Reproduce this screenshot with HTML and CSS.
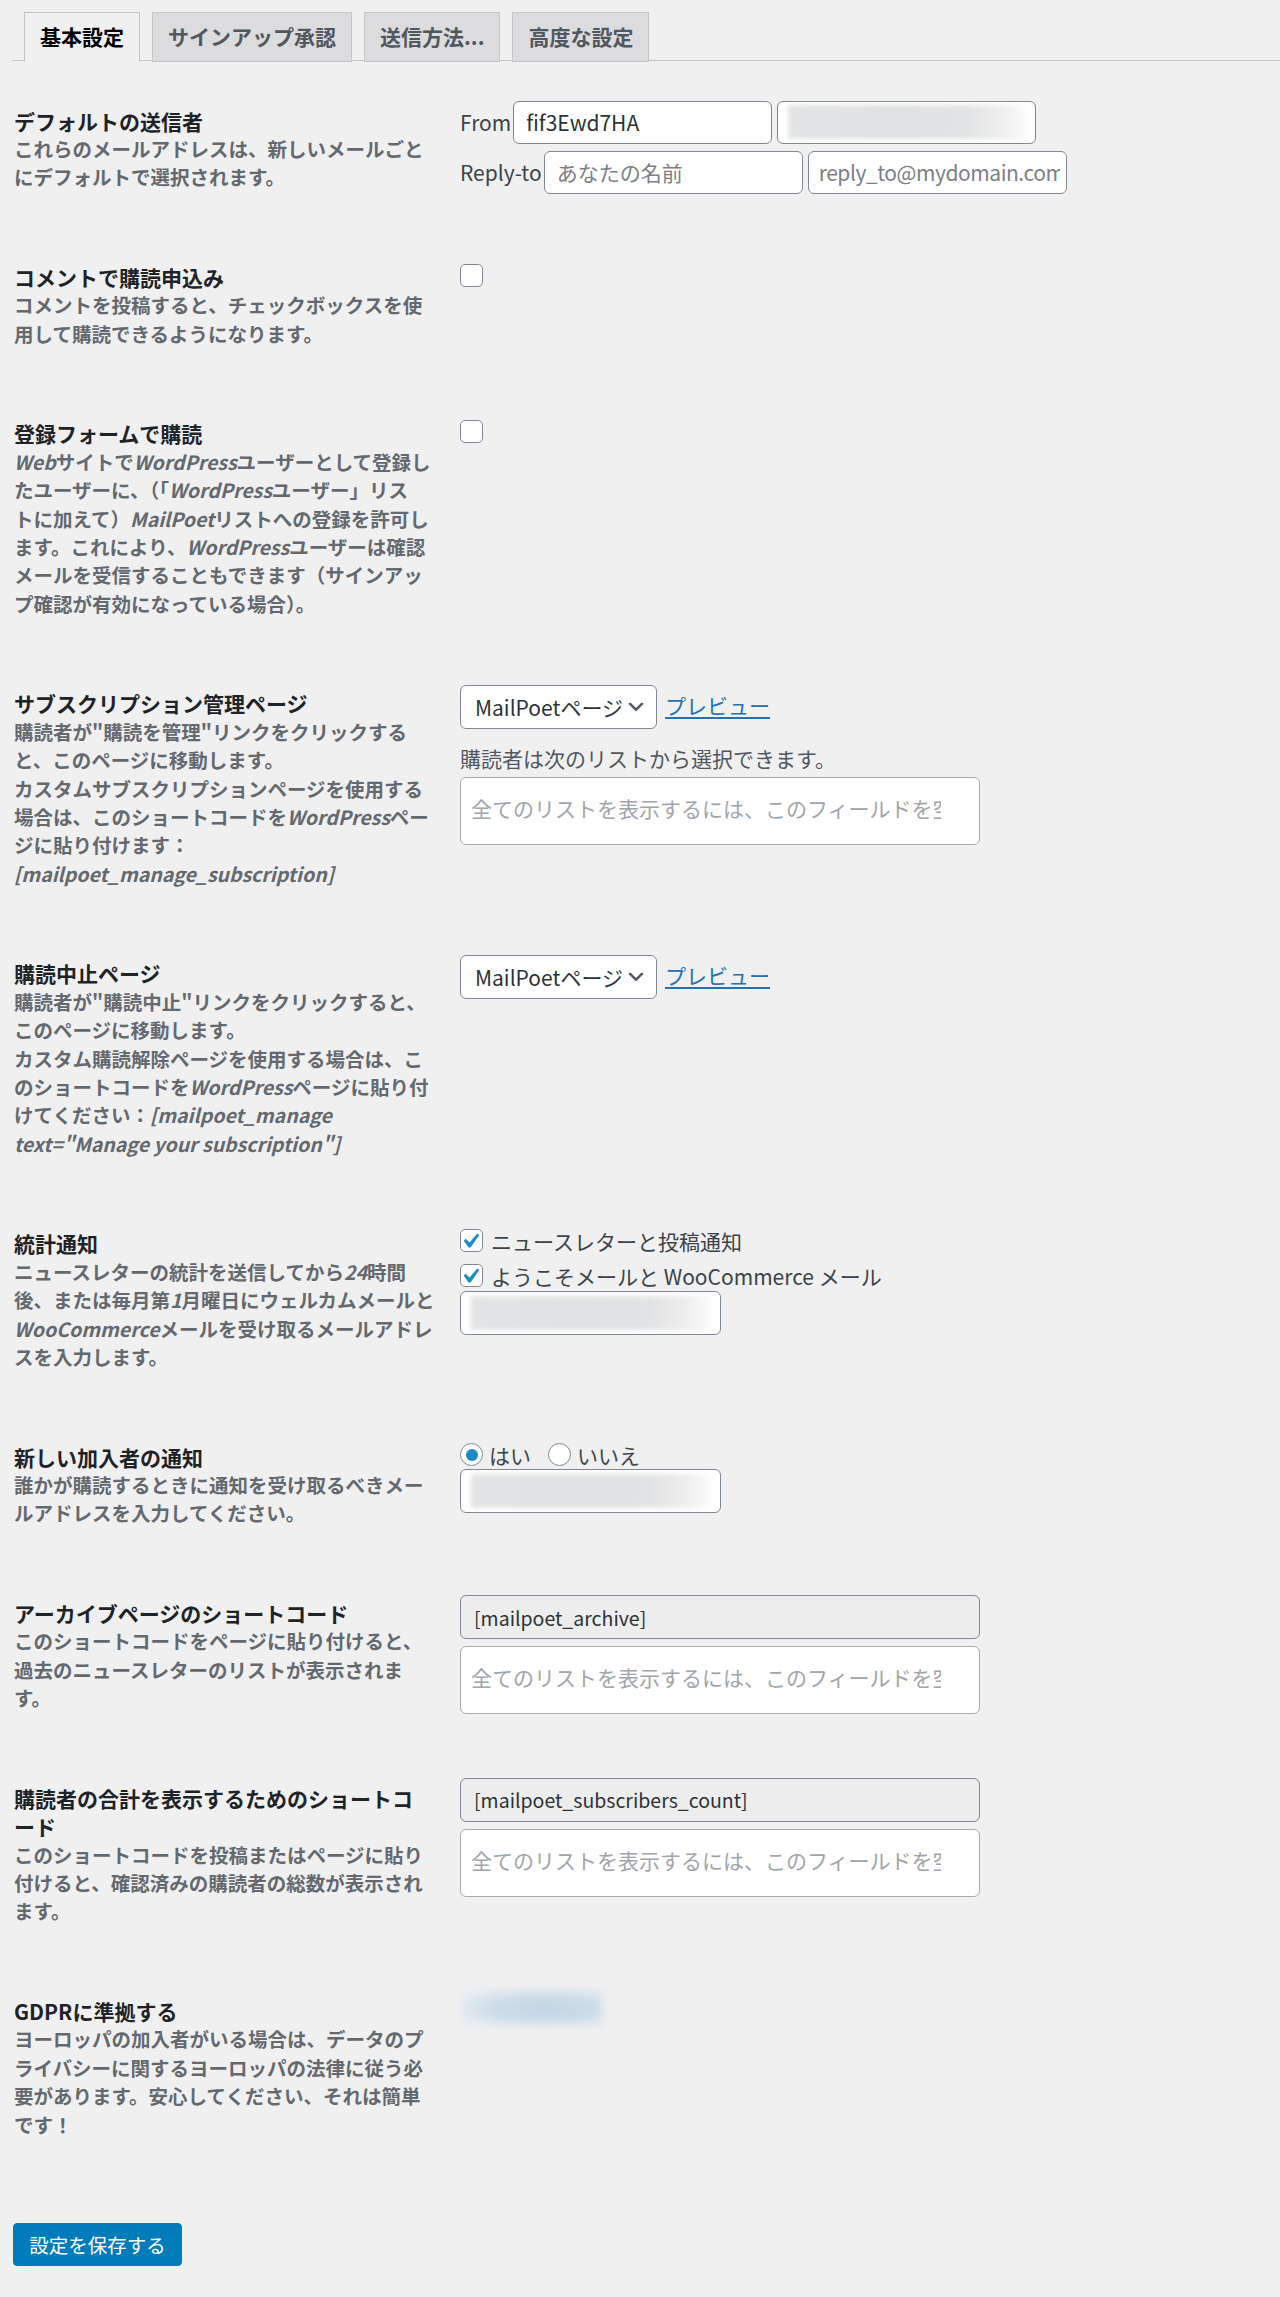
FILE: index.html
```html
<!DOCTYPE html>
<html lang="ja">
<head>
<meta charset="utf-8">
<title>MailPoet 設定</title>
<link rel="stylesheet" href="styles.css">
</head>
<body>
<div class="wrap">
  <nav class="tabs">
    <a class="tab active">基本設定</a>
    <a class="tab">サインアップ承認</a>
    <a class="tab">送信方法...</a>
    <a class="tab">高度な設定</a>
  </nav>

  <div class="form">
    <div class="row">
      <div class="th">
        <div class="label">デフォルトの送信者</div>
        <p class="desc">これらのメールアドレスは、新しいメールごと<br>にデフォルトで選択されます。</p>
      </div>
      <div class="td">
        <div class="sender">
          <span class="sender-label">From</span>
          <input class="text" type="text" value="fif3Ewd7HA">
          <div class="text blurred"><span class="smudge"></span></div>
        </div>
        <div class="sender">
          <span class="sender-label">Reply-to</span>
          <input class="text" type="text" placeholder="あなたの名前">
          <input class="text tight" type="text" placeholder="reply_to@mydomain.com">
        </div>
      </div>
    </div>

    <div class="row">
      <div class="th">
        <div class="label">コメントで購読申込み</div>
        <p class="desc">コメントを投稿すると、チェックボックスを使<br>用して購読できるようになります。</p>
      </div>
      <div class="td td-cb">
        <div class="check-line"><span class="cb"></span></div>
      </div>
    </div>

    <div class="row">
      <div class="th">
        <div class="label">登録フォームで購読</div>
        <p class="desc"><i>Web</i>サイトで<i>WordPress</i>ユーザーとして登録し<br>たユーザーに、（「<i>WordPress</i>ユーザー」リス<br>トに加えて）<i>MailPoet</i>リストへの登録を許可し<br>ます。これにより、<i>WordPress</i>ユーザーは確認<br>メールを受信することもできます（サインアッ<br>プ確認が有効になっている場合）。</p>
      </div>
      <div class="td td-cb">
        <div class="check-line"><span class="cb"></span></div>
      </div>
    </div>

    <div class="row">
      <div class="th">
        <div class="label">サブスクリプション管理ページ</div>
        <p class="desc">購読者が"購読を管理"リンクをクリックする<br>と、このページに移動します。<br>カスタムサブスクリプションページを使用する<br>場合は、このショートコードを<i>WordPress</i>ペー<br>ジに貼り付けます：<br><i>[mailpoet_manage_subscription]</i></p>
      </div>
      <div class="td td-sel">
        <div class="select-line">
          <span class="select">MailPoetページ<svg class="chev" viewBox="0 0 20 20" width="22" height="22"><path d="M5 6l5 5 5-5 2 1-7 7-7-7 2-1z" fill="#50575e"/></svg></span>
          <a class="link">プレビュー</a>
        </div>
        <p class="note">購読者は次のリストから選択できます。</p>
        <div class="s2"><span class="s2-ph">全てのリストを表示するには、このフィールドを空のままにします</span></div>
      </div>
    </div>

    <div class="row">
      <div class="th">
        <div class="label">購読中止ページ</div>
        <p class="desc">購読者が"購読中止"リンクをクリックすると、<br>このページに移動します。<br>カスタム購読解除ページを使用する場合は、こ<br>のショートコードを<i>WordPress</i>ページに貼り付<br>けてください：<i>[mailpoet_manage</i><br><i>text="Manage your subscription"]</i></p>
      </div>
      <div class="td td-sel">
        <div class="select-line">
          <span class="select">MailPoetページ<svg class="chev" viewBox="0 0 20 20" width="22" height="22"><path d="M5 6l5 5 5-5 2 1-7 7-7-7 2-1z" fill="#50575e"/></svg></span>
          <a class="link">プレビュー</a>
        </div>
      </div>
    </div>

    <div class="row">
      <div class="th">
        <div class="label">統計通知</div>
        <p class="desc">ニュースレターの統計を送信してから<i>24</i>時間<br>後、または毎月第<i>1</i>月曜日にウェルカムメールと<br><i>WooCommerce</i>メールを受け取るメールアドレ<br>スを入力します。</p>
      </div>
      <div class="td">
        <label class="check-line"><span class="cb checked"><svg viewBox="4.67 3.25 12.6 12.6" width="19" height="19"><path d="M14.83 4.89l1.34.94-5.81 8.38H9.02L5.78 9.67l1.34-1.25 2.57 2.4z" fill="#1e8cbe"/></svg></span>ニュースレターと投稿通知</label>
        <label class="check-line"><span class="cb checked"><svg viewBox="4.67 3.25 12.6 12.6" width="19" height="19"><path d="M14.83 4.89l1.34.94-5.81 8.38H9.02L5.78 9.67l1.34-1.25 2.57 2.4z" fill="#1e8cbe"/></svg></span>ようこそメールと WooCommerce メール</label>
        <div class="text short blurred"><span class="smudge"></span></div>
      </div>
    </div>

    <div class="row">
      <div class="th">
        <div class="label">新しい加入者の通知</div>
        <p class="desc">誰かが購読するときに通知を受け取るべきメー<br>ルアドレスを入力してください。</p>
      </div>
      <div class="td td-radio">
        <div class="radio-line">
          <label class="radio-opt"><span class="radio on"></span>はい</label>
          <label class="radio-opt"><span class="radio"></span>いいえ</label>
        </div>
        <div class="text short blurred"><span class="smudge"></span></div>
      </div>
    </div>

    <div class="row">
      <div class="th">
        <div class="label">アーカイブページのショートコード</div>
        <p class="desc">このショートコードをページに貼り付けると、<br>過去のニュースレターのリストが表示されま<br>す。</p>
      </div>
      <div class="td td-sel">
        <input class="ro" type="text" value="[mailpoet_archive]" readonly>
        <div class="s2 s2-after"><span class="s2-ph">全てのリストを表示するには、このフィールドを空のままにします</span></div>
      </div>
    </div>

    <div class="row">
      <div class="th">
        <div class="label">購読者の合計を表示するためのショートコ<br>ード</div>
        <p class="desc">このショートコードを投稿またはページに貼り<br>付けると、確認済みの購読者の総数が表示され<br>ます。</p>
      </div>
      <div class="td">
        <input class="ro" type="text" value="[mailpoet_subscribers_count]" readonly>
        <div class="s2 s2-after"><span class="s2-ph">全てのリストを表示するには、このフィールドを空のままにします</span></div>
      </div>
    </div>

    <div class="row">
      <div class="th">
        <div class="label">GDPRに準拠する</div>
        <p class="desc">ヨーロッパの加入者がいる場合は、データのプ<br>ライバシーに関するヨーロッパの法律に従う必<br>要があります。安心してください、それは簡単<br>です！</p>
      </div>
      <div class="td td-gdpr">
        <span class="gdpr-blob"></span>
      </div>
    </div>
  </div>

  <button class="save" type="button">設定を保存する</button>
</div>
</body>
</html>
```

FILE: styles.css
```css
* {
  box-sizing: border-box;
}

html,
body {
  margin: 0;
  padding: 0;
}

body {
  background: #f0f0f1;
  color: #3c434a;
  font-family: "Noto Sans CJK JP", "Noto Sans", sans-serif;
  font-size: 21px;
  min-height: 2297px;
}

.wrap {
  padding: 12px 0 30px 12px;
}

/* Tabs */
.tabs {
  display: flex;
  gap: 12px;
  padding-left: 12px;
  border-bottom: 1.5px solid #c3c4c7;
}

.tab {
  display: block;
  margin-bottom: -1.5px;
  padding: 0 15px;
  border: 1.5px solid #c3c4c7;
  background: #dcdcde;
  color: #50575e;
  font-size: 21px;
  font-weight: 700;
  line-height: 47.5px;
  white-space: nowrap;
}

.tab.active {
  background: #f0f0f1;
  color: #000;
  border-bottom-color: #f0f0f1;
}

/* Form table */
.form {
  margin: 15.5px 0 0 2px;
}

.row {
  display: grid;
  grid-template-columns: 446px 1fr;
  align-items: start;
}

.th {
  padding: 30px 0 41.2px;
}

.label {
  color: #1d2327;
  font-size: 21px;
  font-weight: 700;
  line-height: 28.4px;
  white-space: nowrap;
}

.desc {
  margin: 0;
  color: #646970;
  font-size: 19.5px;
  font-weight: 700;
  line-height: 28.4px;
  white-space: nowrap;
}

.desc i {
  font-style: italic;
}

.td {
  padding-top: 24px;
}

.td-cb {
  padding-top: 25px;
}

.td-sel {
  padding-top: 26px;
}

.td-radio {
  padding-top: 26px;
}

.td-gdpr {
  padding-top: 22px;
}

/* Sender inputs */
.sender {
  display: flex;
  align-items: center;
  gap: 5px;
  height: 43px;
}

.sender + .sender {
  margin-top: 7px;
}

.sender-label {
  color: #3c434a;
  font-size: 21px;
  margin-right: -3px;
}

.text {
  width: 259px;
  height: 43px;
  padding: 0 12px;
  border: 1.5px solid #7e8993;
  border-radius: 6px;
  background: #fff;
  color: #2c3338;
  font-family: inherit;
  font-size: 21px;
  outline: none;
}

.text.tight {
  padding: 0 6px 0 10px;
  letter-spacing: -0.45px;
}

.text::placeholder {
  color: #7c8086;
}

.blurred {
  display: flex;
  align-items: center;
  padding: 0 10px 0 10px;
}

.smudge {
  display: block;
  width: 100%;
  height: 34px;
  background: linear-gradient(90deg, #e3e4e5 0%, #e0e1e2 45%, #e2e3e4 75%, #eeeeef 90%, #fafafa 100%);
  filter: blur(2px);
}

.text.short {
  width: 261px;
  height: 44px;
}

/* Checkboxes */
.check-line {
  display: flex;
  align-items: center;
  gap: 8px;
  height: 35px;
  color: #3c434a;
  font-size: 21px;
}

.cb {
  display: flex;
  align-items: center;
  justify-content: center;
  flex: none;
  width: 23px;
  height: 23px;
  border: 1.5px solid #7e8993;
  border-radius: 5px;
  background: #fff;
}

.cb svg {
  display: block;
}

.short.blurred {
  margin-top: -2px;
}

/* Radios */
.radio-line {
  display: flex;
  align-items: center;
  gap: 17px;
  height: 32px;
}

.radio-opt {
  display: flex;
  align-items: center;
  gap: 6px;
  color: #3c434a;
  font-size: 21px;
}

.radio {
  display: flex;
  align-items: center;
  justify-content: center;
  width: 23px;
  height: 23px;
  border: 1.5px solid #7e8993;
  border-radius: 50%;
  background: #fff;
}

.radio.on::before {
  content: "";
  width: 12px;
  height: 12px;
  border-radius: 50%;
  background: #1e8cbe;
}

/* Select + link */
.select-line {
  display: flex;
  align-items: center;
  gap: 8px;
}

.select {
  display: flex;
  align-items: center;
  justify-content: space-between;
  width: 197px;
  height: 44px;
  padding: 0 9px 0 14px;
  border: 1.5px solid #7e8993;
  border-radius: 6px;
  background: #fff;
  color: #2c3338;
  font-size: 21px;
  white-space: nowrap;
}

.chev {
  display: block;
  flex: none;
}

.link {
  color: #2271b1;
  text-decoration: underline;
  text-underline-offset: 3px;
  font-size: 21px;
  margin-top: -4px;
}

.note {
  margin: 15px 0 0;
  color: #50575e;
  font-size: 21px;
  line-height: 28.4px;
}

/* Select2-like list fields */
.s2 {
  width: 520px;
  height: 68px;
  margin-top: 4px;
  padding: 16px 0 0 10px;
  border: 1.5px solid #aaaaaa;
  border-radius: 6px;
  background: #fff;
}

.s2-after {
  margin-top: 7px;
}

.s2-ph {
  display: block;
  width: 470px;
  overflow: hidden;
  white-space: nowrap;
  color: #a0a5aa;
  font-size: 21px;
  line-height: 28.4px;
}

.ro {
  display: block;
  width: 520px;
  height: 44px;
  padding: 0 13px;
  border: 1.5px solid #7e8993;
  border-radius: 6px;
  background: #ededee;
  color: #2c3338;
  font-family: inherit;
  font-size: 19.5px;
  outline: none;
}

/* GDPR blurred link */
.gdpr-blob {
  display: block;
  width: 140px;
  height: 36px;
  margin-left: 2px;
  background: radial-gradient(ellipse at 60% 55%, #c3d5e4 0%, #cddce8 45%, #e3eaf0 75%, #f0f0f1 100%);
  filter: blur(4px);
}

/* Save button */
.save {
  display: block;
  margin: 42.5px 0 0 1px;
  width: 169px;
  height: 43px;
  padding: 0;
  border: 1.5px solid #007cba;
  border-radius: 4px;
  background: #007cba;
  color: #fff;
  font-family: inherit;
  font-size: 19.5px;
}
```
